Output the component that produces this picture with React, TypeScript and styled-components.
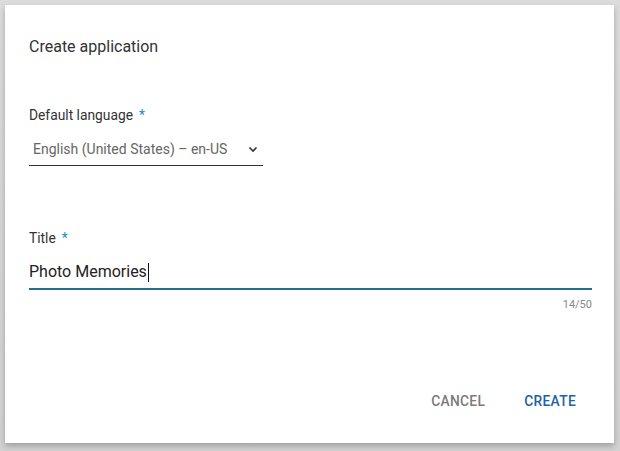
import React from "react";
import styled, { createGlobalStyle } from "styled-components";

const Global = createGlobalStyle`
  html, body { margin: 0; padding: 0; }
  body { font-family: Roboto, "Noto Sans", sans-serif; background: #d6d6d6; }
`;

const Backdrop = styled.div`
  width: 620px;
  height: 451px;
  box-sizing: border-box;
  padding: 5px 6px 8px 5px;
  background: linear-gradient(#dcdcdc, #d2d2d2);
`;

const Dialog = styled.div`
  height: 100%;
  background: #fff;
  box-shadow: 0 3px 6px rgba(0,0,0,0.25);
  display: flex;
  flex-direction: column;
  padding: 0 22px 0 24px;
  box-sizing: border-box;
`;

const Heading = styled.h2`
  margin: 33px 0 0 0;
  font-size: 16px;
  font-weight: 400;
  color: #333;
  line-height: 18px;
`;

const Field = styled.div<{ $top: number; $width?: string }>`
  margin-top: ${p => p.$top}px;
  width: ${p => p.$width || "auto"};
  display: flex;
  flex-direction: column;
`;

const Label = styled.label`
  font-size: 13.8px;
  color: #333;
  line-height: 16px;
`;

const Star = styled.span`
  color: #1b8bc6;
  margin-left: 6px;
`;

const SelectBox = styled.div`
  margin-top: 17px;
  display: flex;
  align-items: center;
  justify-content: space-between;
  padding: 0 4px 7px 4px;
  border-bottom: 1px solid #333;
`;

const SelectText = styled.span`
  font-size: 14px;
  color: #666;
  line-height: 18px;
`;

const InputLine = styled.div`
  margin-top: 16px;
  display: flex;
  align-items: center;
  padding-bottom: 6px;
  border-bottom: 2px solid #1f6f8f;
`;

const InputText = styled.span`
  font-size: 16px;
  color: #222;
  line-height: 20px;
`;

const Caret = styled.span`
  display: inline-block;
  width: 1px;
  height: 19px;
  background: #111;
  margin-left: 1px;
`;

const Counter = styled.div`
  align-self: flex-end;
  margin-top: 8px;
  font-size: 11px;
  color: #888;
`;

const Actions = styled.div`
  margin-top: auto;
  margin-bottom: 34px;
  display: flex;
  justify-content: flex-end;
  gap: 39px;
  padding-right: 16px;
`;

const Button = styled.button<{ $primary?: boolean }>`
  border: none;
  background: none;
  padding: 0;
  font-family: Roboto, sans-serif;
  font-size: 13.8px;
  font-weight: 500;
  letter-spacing: 0.3px;
  color: ${p => (p.$primary ? "#1c63a3" : "#7a7a7a")};
  cursor: pointer;
`;

export default function App() {
  return (
    <>
      <Global />
      <Backdrop>
        <Dialog>
          <Heading>Create application</Heading>
          <Field $top={51} $width="234px">
            <Label>Default language<Star>*</Star></Label>
            <SelectBox>
              <SelectText>English (United States) – en-US</SelectText>
              <svg width="12" height="12" viewBox="0 0 12 12">
                <path d="M2.5 4.5 L6 8 L9.5 4.5" fill="none" stroke="#333" strokeWidth="1.6" />
              </svg>
            </SelectBox>
          </Field>
          <Field $top={64}>
            <Label>Title<Star>*</Star></Label>
            <InputLine>
              <InputText>Photo Memories</InputText>
              <Caret />
            </InputLine>
            <Counter>14/50</Counter>
          </Field>
          <Actions>
            <Button>CANCEL</Button>
            <Button $primary>CREATE</Button>
          </Actions>
        </Dialog>
      </Backdrop>
    </>
  );
}
